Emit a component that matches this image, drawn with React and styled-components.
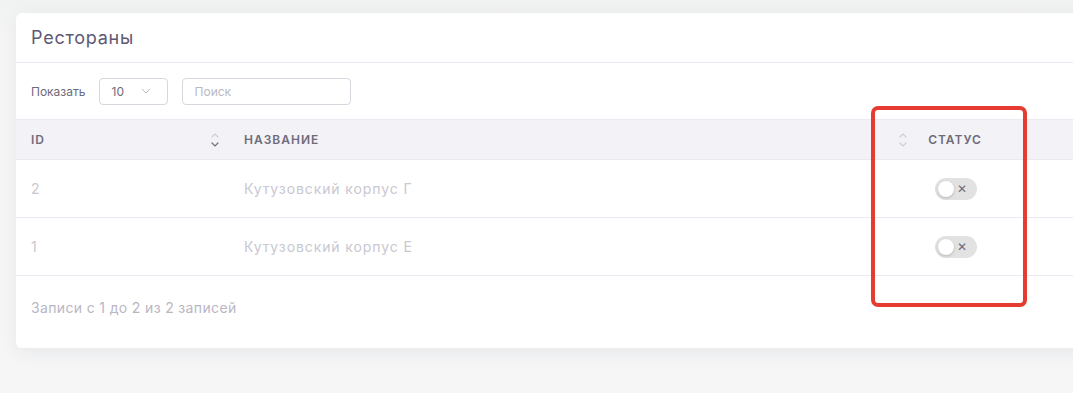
import * as React from "react";
import styled, { createGlobalStyle } from "styled-components";

const GlobalStyle = createGlobalStyle`
    body {
        margin: 0;
        background: #f5f5f6;
        font-family: Inter, "Noto Sans", sans-serif;
        overflow: hidden;
    }
`;

const Page = styled.div`
    position: relative;
    padding: 13px 0 0 16px;
    height: 393px;
    box-sizing: border-box;
    background: linear-gradient(#f0f1f1 0, #f6f6f7 40px);
`;

const Card = styled.div`
    width: 1080px;
    background: #fff;
    border-radius: 6px;
    box-shadow: 0 4px 18px rgba(34, 41, 47, 0.07);
`;

const CardHeader = styled.div`
    height: 49px;
    display: flex;
    align-items: center;
    padding-left: 15px;
    border-bottom: 1px solid #ebe9f1;

    h4 {
        margin: 0;
        font-size: 18px;
        font-weight: 400;
        color: #5e5873;
        letter-spacing: 0.75px;
    }
`;

const Controls = styled.div`
    height: 56px;
    display: flex;
    align-items: center;
    padding-left: 15px;
    gap: 14px;
    font-size: 12px;
    color: #6e6b7b;
`;

const Field = styled.div`
    height: 27px;
    box-sizing: border-box;
    border: 1px solid #d8d6de;
    border-radius: 4px;
    display: flex;
    align-items: center;
    justify-content: space-between;
    padding: 0 ${p => p.right || 12}px 0 12px;
    width: ${p => p.width}px;
    margin-left: ${p => p.offset || 0}px;
    color: ${p => p.muted ? "#b9b9c3" : "#6e6b7b"};
    font-size: 12px;
`;

const Row = styled.div`
    display: grid;
    grid-template-columns: 212px 688px 80px 1fr;
    align-items: center;
    height: ${p => p.head ? 39 : 57}px;
    background: ${p => p.head ? "#f3f2f7" : "#fff"};
    border-bottom: 1px solid #ebe9f1;
    border-top: ${p => p.head ? "1px solid #ebe9f1" : "none"};
`;

const HeadCell = styled.div`
    display: flex;
    align-items: center;
    justify-content: ${p => p.center ? "center" : "space-between"};
    padding-right: 8px;
    padding-left: ${p => p.left ?? 15}px;
    font-size: 12px;
    font-weight: 600;
    letter-spacing: 1px;
    color: #6e6b7b;
`;

const Cell = styled.div`
    padding-left: ${p => p.left ?? 15}px;
    font-size: 14px;
    letter-spacing: 0.9px;
    color: #c9c7d1;
    display: flex;
    justify-content: ${p => p.center ? "center" : "flex-start"};
`;

const Toggle = styled.div`
    width: 42px;
    height: 22px;
    border-radius: 11px;
    background: #e2e2e2;
    display: flex;
    align-items: center;
    justify-content: space-between;
    padding: 0 10px 0 3px;
    box-sizing: border-box;
    margin-left: 0;

    .knob {
        width: 16px;
        height: 16px;
        border-radius: 50%;
        background: #fff;
        box-shadow: 0 1px 3px rgba(0,0,0,0.2);
    }

    .x {
        font-size: 12px;
        letter-spacing: 0;
        color: #6e6b7b;
    }
`;

const Footer = styled.div`
    box-sizing: border-box;
    height: 72px;
    padding-top: 23px;
    padding-left: 15px;
    font-size: 14px;
    letter-spacing: 0.35px;
    color: #b9b6c4;
`;

const Highlight = styled.div`
    position: absolute;
    left: 871px;
    top: 106px;
    width: 156px;
    height: 201px;
    box-sizing: border-box;
    border: 4px solid #e53b30;
    border-radius: 7px;
`;

const SortIcon = ({ down }) => (
    <svg width="10" height="18" viewBox="0 0 10 18" fill="none" strokeWidth="1.2" strokeLinecap="round">
        <path d="M2 6 L5 3 L8 6" stroke="#d0ceda" />
        <path d="M2 12 L5 15 L8 12" stroke={down ? "#6e6b7b" : "#d0ceda"} />
    </svg>
);

const Chevron = () => (
    <svg width="10" height="6" viewBox="0 0 10 6" fill="none">
        <path d="M1 1 L5 5 L9 1" stroke="#b9b9c3" strokeWidth="1" />
    </svg>
);

const rows = [
    { id: 2, name: "Кутузовский корпус Г" },
    { id: 1, name: "Кутузовский корпус Е" },
];

const App = () => (
    <>
        <GlobalStyle />
        <Page>
            <Card>
                <CardHeader><h4>Рестораны</h4></CardHeader>
                <Controls>
                    <span>Показать</span>
                    <Field width={69} offset={-1} right={16}>10 <Chevron /></Field>
                    <Field width={169} muted>Поиск</Field>
                </Controls>
                <Row head>
                    <HeadCell>ID <SortIcon down /></HeadCell>
                    <HeadCell left={16}>НАЗВАНИЕ <SortIcon /></HeadCell>
                    <HeadCell center left={6}>СТАТУС</HeadCell>
                    <div />
                </Row>
                {rows.map(r => (
                    <Row key={r.id}>
                        <Cell>{r.id}</Cell>
                        <Cell left={16}>{r.name}</Cell>
                        <Cell center left={0}>
                            <Toggle><span className="knob" /><span className="x">✕</span></Toggle>
                        </Cell>
                        <div />
                    </Row>
                ))}
                <Footer>Записи с 1 до 2 из 2 записей</Footer>
            </Card>
            <Highlight />
        </Page>
    </>
);

export default App;
